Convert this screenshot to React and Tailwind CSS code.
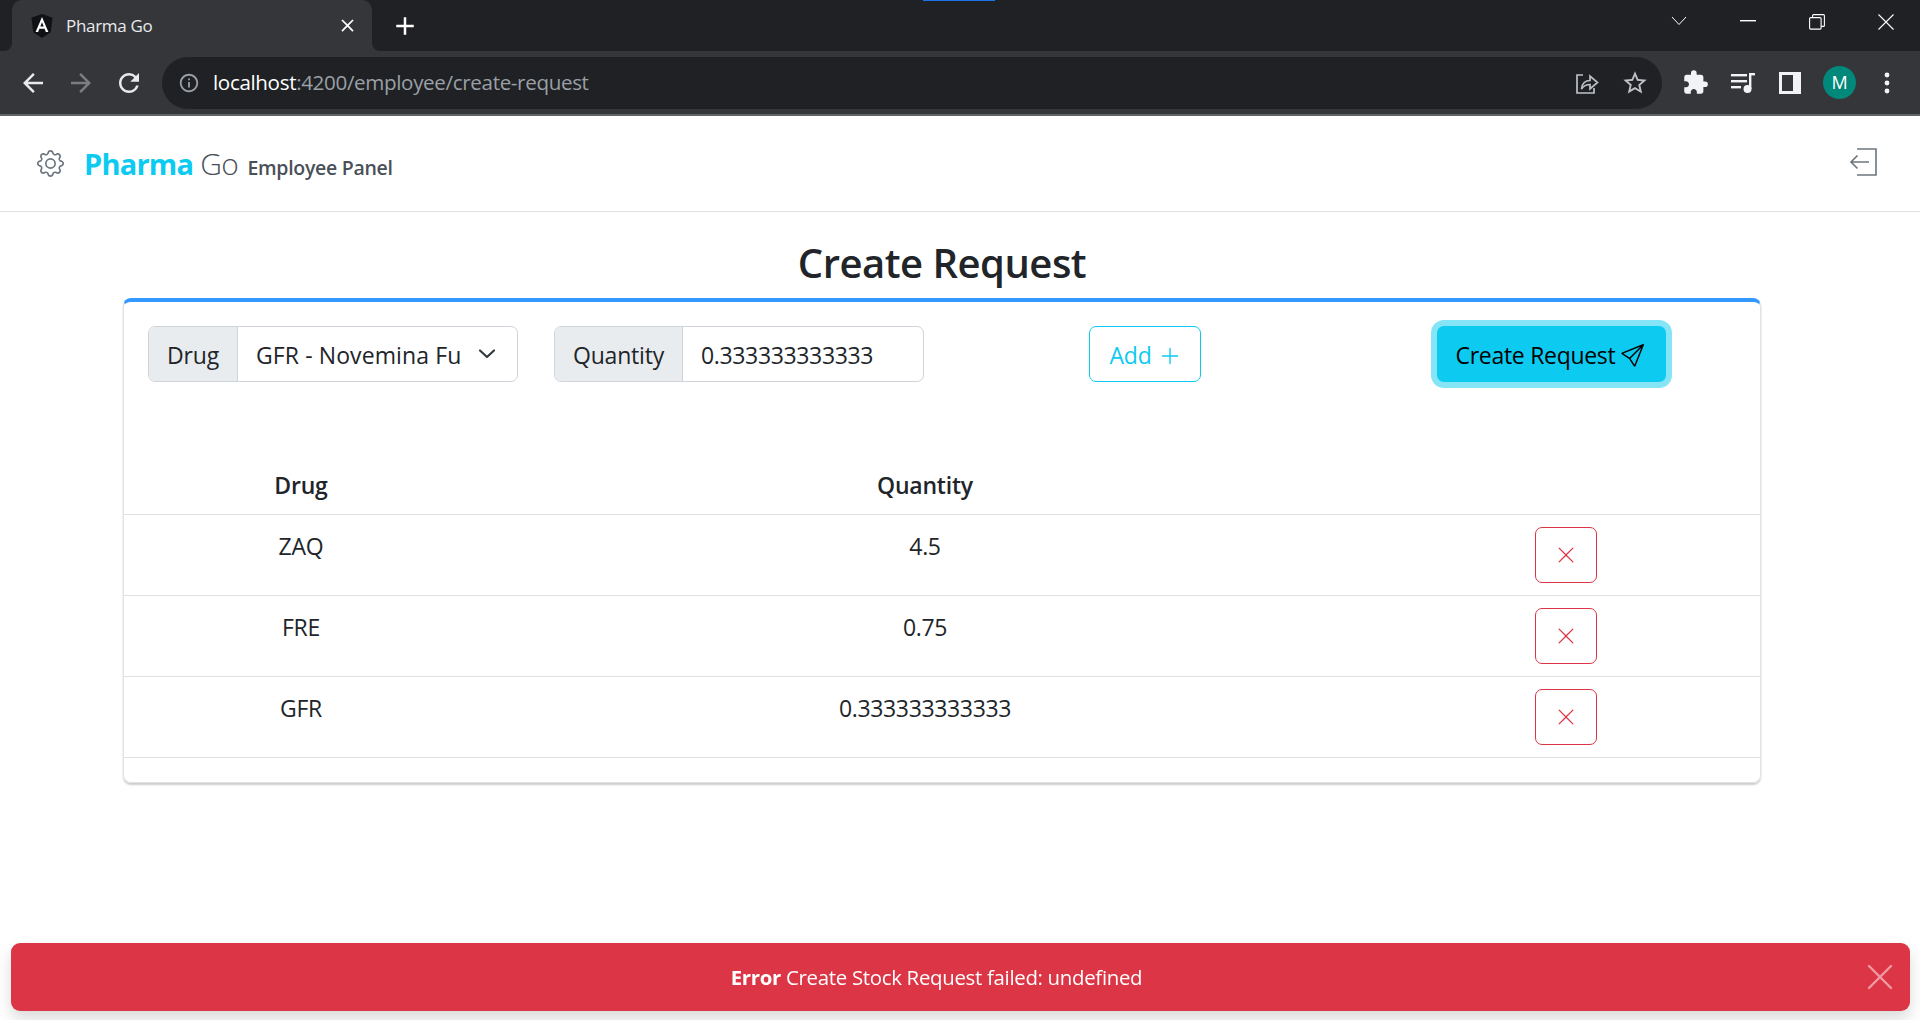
import React from 'react'
import { BsGear, BsSend, BsPlusLg, BsXLg } from 'react-icons/bs'
import {
  MdArrowBack,
  MdArrowForward,
  MdRefresh,
  MdInfoOutline,
  MdStarBorder,
  MdExtension,
  MdClose,
  MdAdd,
} from 'react-icons/md'

const rows = [
  { drug: 'ZAQ', quantity: '4.5' },
  { drug: 'FRE', quantity: '0.75' },
  { drug: 'GFR', quantity: '0.333333333333' },
]

function AngularLogo() {
  return (
    <svg width="22" height="24" viewBox="0 0 22 24" className="shrink-0">
      <path d="M11 0 L21.5 3.8 L19.8 18.2 L11 24 L2.2 18.2 L0.5 3.8 Z" fill="#0f1114" />
      <path d="M11 3 L4.6 18 H7.1 L8.4 14.7 H13.6 L14.9 18 H17.4 Z M9.3 12.6 L11 8.3 L12.7 12.6 Z" fill="#fff" fillRule="evenodd" />
    </svg>
  )
}

function BrowserChrome() {
  return (
    <div className="shrink-0 font-['Open_Sans',sans-serif]">
      {/* tab strip */}
      <div className="relative flex h-[51px] bg-[#202124] pl-3">
        <div className="absolute left-[923px] top-0 h-px w-[72px] bg-[#1a73e8]" />
        <div className="relative flex w-[360px] items-center rounded-t-[10px] bg-[#35363a] pl-[19px] pr-[14px]">
          <div className="absolute bottom-0 left-[-8px] h-2 w-2 bg-[#35363a]">
            <div className="h-full w-full rounded-br-lg bg-[#202124]" />
          </div>
          <div className="absolute bottom-0 right-[-8px] h-2 w-2 bg-[#35363a]">
            <div className="h-full w-full rounded-bl-lg bg-[#202124]" />
          </div>
          <AngularLogo />
          <span className="ml-[13px] text-[17px] tracking-[-0.3px] text-[#e8eaed]">Pharma Go</span>
          <MdClose className="ml-auto text-white" size={21} />
        </div>
        <MdAdd className="ml-[18px] mt-[11px] text-white" size={30} />
        <div className="ml-auto mr-[26px] flex items-start">
          <svg width="20" height="12" viewBox="0 0 20 12" className="mr-[51px] mt-[15px]" fill="none" stroke="#fff" strokeWidth="1">
            <path d="M3 2 L10 9.5 L17 2" />
          </svg>
          <svg width="16" height="2" viewBox="0 0 16 2" className="mr-[53px] mt-[20px]">
            <rect width="16" height="1.4" fill="#fff" />
          </svg>
          <svg width="16" height="16" viewBox="0 0 16 16" className="mr-[53px] mt-[14px]" fill="none" stroke="#fff" strokeWidth="1.1">
            <rect x="0.6" y="3.6" width="11.5" height="11.5" rx="1" />
            <path d="M3.6 3.6 V1.6 a1 1 0 0 1 1-1 H14.4 a1 1 0 0 1 1 1 V11.4 a1 1 0 0 1-1 1 H12.1" />
          </svg>
          <svg width="16" height="16" viewBox="0 0 16 16" className="mt-[14px]" fill="none" stroke="#fff" strokeWidth="1.1">
            <path d="M0.5 0.5 L15.5 15.5 M15.5 0.5 L0.5 15.5" />
          </svg>
        </div>
      </div>
      {/* toolbar */}
      <div className="flex h-[63px] items-center bg-[#35363a]">
        <MdArrowBack className="ml-[18px] text-[#e8eaed]" size={30} />
        <MdArrowForward className="ml-[18px] text-[#7b7d81]" size={30} />
        <MdRefresh className="ml-[18px] text-[#e8eaed]" size={30} />
        <div className="ml-[18px] flex h-[52px] w-[1500px] items-center rounded-full bg-[#202124] pl-[16px]">
          <MdInfoOutline className="text-[#9aa0a6]" size={22} />
          <span className="ml-[13px] text-[20.6px] tracking-[-0.35px] text-white">
            localhost<span className="text-[#9aa0a6]">:4200/employee/create-request</span>
          </span>
          <svg width="24" height="24" viewBox="0 0 24 24" className="ml-auto" fill="none" stroke="#bdc1c6" strokeWidth="1.7">
            <path d="M8 4 H2 V22 H19 V17" />
            <path d="M6.5 18 C7 12.5 10.5 9.5 15 9.5 V5 L22.5 11.5 L15 18 V13.5 C11.5 13.5 8.5 15 6.5 18 Z" />
          </svg>
          <MdStarBorder className="ml-[22px] mr-[13px] text-[#bdc1c6]" size={28} />
        </div>
        <MdExtension className="ml-[20px] text-[#f1f3f4]" size={27} />
        <svg width="26" height="24" viewBox="0 0 26 24" className="ml-[21px]" fill="#f1f3f4">
          <rect x="1" y="3" width="16" height="2.4" />
          <rect x="1" y="9" width="16" height="2.4" />
          <rect x="1" y="15" width="10" height="2.4" />
          <rect x="19" y="2" width="2.4" height="16" />
          <rect x="19" y="2" width="6" height="2.4" />
          <circle cx="17.5" cy="18" r="4" />
        </svg>
        <svg width="22" height="22" viewBox="0 0 22 22" className="ml-[23px]">
          <rect width="22" height="22" fill="#f1f3f4" />
          <rect x="3" y="3" width="11" height="16" fill="#35363a" />
        </svg>
        <div className="ml-[22px] flex h-[33px] w-[33px] items-center justify-center rounded-full bg-[#00897b] text-[18px] text-white">
          M
        </div>
        <svg width="6" height="22" viewBox="0 0 6 22" className="ml-[28px]" fill="#f1f3f4">
          <circle cx="3" cy="3" r="2.4" />
          <circle cx="3" cy="11" r="2.4" />
          <circle cx="3" cy="19" r="2.4" />
        </svg>
      </div>
      <div className="h-[2px] bg-[#5f6368]" />
    </div>
  )
}

function PageHeader() {
  return (
    <header className="flex h-[96px] shrink-0 items-center border-b border-[#dee2e6] pl-[37px] pr-[43px]">
      <BsGear className="text-[#6c757d]" size={27} />
      <div className="ml-[20px] flex items-baseline">
        <span className="text-[29px] font-bold tracking-[-0.8px] text-[#0dcaf0]">Pharma</span>
        <span className="ml-[7px] text-[30px] font-light tracking-[-0.5px] text-[#495057]">Go</span>
        <span className="ml-[9px] text-[19.5px] font-semibold tracking-[-0.3px] text-[#495057]">Employee Panel</span>
      </div>
      <svg width="28" height="28" viewBox="0 0 28 28" className="mb-[3px] ml-auto" fill="none" stroke="#6c757d" strokeWidth="1.6">
        <path d="M8 1 H27 V27 H8" />
        <path d="M20 14 H2 M8.5 7.5 L2 14 L8.5 20.5" />
      </svg>
    </header>
  )
}

function InputGroup({ label, labelWidth, width, children }) {
  return (
    <div
      className={`flex h-[56px] overflow-hidden rounded-[7px] border border-[#ced4da] text-[23px] tracking-[-0.2px] text-[#212529] ${width}`}
    >
      <div className={`flex items-center justify-center border-r border-[#ced4da] bg-[#e9ecef] pt-[3px] ${labelWidth}`}>{label}</div>
      {children}
    </div>
  )
}

function RequestForm() {
  return (
    <div className="flex items-start pl-[24px] pt-[24px]">
      <InputGroup label="Drug" labelWidth="w-[89px]" width="w-[370px]">
        <div className="flex min-w-0 flex-1 items-center pl-[18px] pt-[3px]">
          <span className="w-[206px] overflow-hidden whitespace-nowrap tracking-[0.1px]">GFR - Novemina Fu</span>
          <svg width="18" height="12" viewBox="0 0 18 12" className="mb-[4px] ml-[16px]" fill="none" stroke="#343a40" strokeWidth="2.2" strokeLinecap="round" strokeLinejoin="round">
            <path d="M2 2.5 L9 9 L16 2.5" />
          </svg>
        </div>
      </InputGroup>
      <div className="ml-[36px]">
        <InputGroup label="Quantity" labelWidth="w-[128px]" width="w-[370px]">
          <div className="flex flex-1 items-center pl-[18px] pt-[3px] tracking-[-0.35px]">0.333333333333</div>
        </InputGroup>
      </div>
      <button className="ml-[165px] flex h-[56px] w-[112px] items-center justify-center gap-[7px] rounded-[7px] border border-[#0dcaf0] pt-[3px] text-[23px] tracking-[-0.2px] text-[#0dcaf0]">
        Add
        <BsPlusLg size={22} />
      </button>
      <button className="ml-[236px] flex h-[56px] w-[229px] items-center justify-center gap-[6px] rounded-[7px] bg-[#0dcaf0] pt-[2px] pr-[3px] text-[23px] tracking-[-0.3px] text-black shadow-[0_0_0_6px_rgba(13,202,240,0.5)]">
        Create Request
        <BsSend size={23} />
      </button>
    </div>
  )
}

function RequestTable() {
  return (
    <table className="mt-[77px] w-full table-fixed border-collapse text-[23px] tracking-[-0.2px] text-[#212529]">
      <thead>
        <tr className="h-[55px] border-b border-[#dee2e6]">
          <th className="w-[354px] pb-[3px] font-semibold">Drug</th>
          <th className="w-[894px] pb-[3px] font-semibold">Quantity</th>
          <th />
        </tr>
      </thead>
      <tbody>
        {rows.map((row) => (
          <tr key={row.drug} className="h-[81px] border-b border-[#dee2e6]">
            <td className="pt-[14px] text-center align-top">{row.drug}</td>
            <td className="pt-[14px] text-center align-top tracking-[-0.35px]">{row.quantity}</td>
            <td className="align-top">
              <button className="ml-[163px] mt-[12px] flex h-[56px] w-[62px] items-center justify-center rounded-[7px] border border-[#dc3545] text-[#dc3545]">
                <BsXLg size={20} />
              </button>
            </td>
          </tr>
        ))}
      </tbody>
    </table>
  )
}

function ErrorToast() {
  return (
    <div className="fixed left-[11px] top-[943px] flex h-[68px] w-[1899px] items-center justify-center rounded-[9px] bg-[#dc3545] pr-[48px] text-[20.4px] tracking-[-0.3px] text-white shadow-[0_8px_16px_rgba(0,0,0,0.15)]">
      <span>
        <span className="font-bold">Error</span> Create Stock Request failed: undefined
      </span>
      <svg width="26" height="26" viewBox="0 0 26 26" className="absolute right-[17px] top-[21px]" fill="none" stroke="#fff" strokeOpacity="0.5" strokeWidth="2.4" strokeLinecap="round">
        <path d="M2 2 L24 24 M24 2 L2 24" />
      </svg>
    </div>
  )
}

export default function App() {
  return (
    <div className="flex h-screen flex-col overflow-hidden bg-white font-['Open_Sans',sans-serif] text-[#212529]">
      <BrowserChrome />
      <PageHeader />
      <main className="ml-[123px] w-[1638px]">
        <div className="flex h-[86px] items-center justify-center pt-[16px]">
          <h2 className="text-[40px] font-semibold tracking-[-0.5px] text-[#212529]">Create Request</h2>
        </div>
        <section className="h-[485px] rounded-[8px] border border-t-4 border-[#dee2e6] border-t-[#3399ff] shadow-[0_2px_2px_rgba(0,0,0,0.2)]">
          <RequestForm />
          <RequestTable />
        </section>
      </main>
      <ErrorToast />
    </div>
  )
}
